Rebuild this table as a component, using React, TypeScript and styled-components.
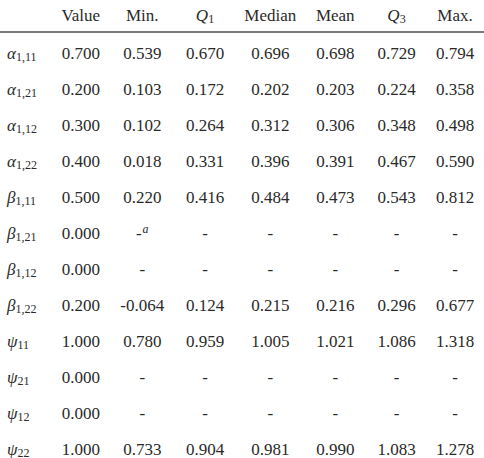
import React from "react";
import styled, { createGlobalStyle } from "styled-components";

const GlobalStyle = createGlobalStyle`
  html, body {
    margin: 0;
    padding: 0;
    background: #ffffff;
  }
`;

const COLUMNS = "50px 61.5px 61.5px 64px 66.5px 63.5px 59px 58px";

interface Row {
  sym: string;
  sub: string;
  vals: string[];
}

const dash = ["-", "-", "-", "-", "-", "-"];

const rows: Row[] = [
  { sym: "α", sub: "1,11", vals: ["0.700", "0.539", "0.670", "0.696", "0.698", "0.729", "0.794"] },
  { sym: "α", sub: "1,21", vals: ["0.200", "0.103", "0.172", "0.202", "0.203", "0.224", "0.358"] },
  { sym: "α", sub: "1,12", vals: ["0.300", "0.102", "0.264", "0.312", "0.306", "0.348", "0.498"] },
  { sym: "α", sub: "1,22", vals: ["0.400", "0.018", "0.331", "0.396", "0.391", "0.467", "0.590"] },
  { sym: "β", sub: "1,11", vals: ["0.500", "0.220", "0.416", "0.484", "0.473", "0.543", "0.812"] },
  { sym: "β", sub: "1,21", vals: ["0.000", "-a", "-", "-", "-", "-", "-"] },
  { sym: "β", sub: "1,12", vals: ["0.000", ...dash] },
  { sym: "β", sub: "1,22", vals: ["0.200", "-0.064", "0.124", "0.215", "0.216", "0.296", "0.677"] },
  { sym: "ψ", sub: "11", vals: ["1.000", "0.780", "0.959", "1.005", "1.021", "1.086", "1.318"] },
  { sym: "ψ", sub: "21", vals: ["0.000", ...dash] },
  { sym: "ψ", sub: "12", vals: ["0.000", ...dash] },
  { sym: "ψ", sub: "22", vals: ["1.000", "0.733", "0.904", "0.981", "0.990", "1.083", "1.278"] },
];

export default function App() {
  return (
    <>
      <GlobalStyle />
      <Table>
        <HeaderRow>
          <Cell />
          <Cell>Value</Cell>
          <Cell>Min.</Cell>
          <Cell>
            <MathVar>Q</MathVar>
            <Sub>1</Sub>
          </Cell>
          <Cell>Median</Cell>
          <Cell>Mean</Cell>
          <Cell>
            <MathVar>Q</MathVar>
            <Sub>3</Sub>
          </Cell>
          <Cell>Max.</Cell>
        </HeaderRow>
        <Rule />
        <Body>
          {rows.map((r, i) => (
            <DataRow key={i}>
              <LabelCell>
                <MathVar>{r.sym}</MathVar>
                <Sub>{r.sub}</Sub>
              </LabelCell>
              {r.vals.map((v, j) => (
                <Cell key={j}>
                  {v === "-a" ? (
                    <>
                      -<Sup>a</Sup>
                    </>
                  ) : (
                    v
                  )}
                </Cell>
              ))}
            </DataRow>
          ))}
        </Body>
      </Table>
    </>
  );
}

const Table = styled.div`
  width: 484px;
  display: flex;
  flex-direction: column;
  font-family: "Liberation Serif", "Times New Roman", Times, serif;
  font-size: 17px;
  color: #2a2a2a;
`;

const HeaderRow = styled.div`
  display: grid;
  grid-template-columns: ${COLUMNS};
  line-height: 28px;
  padding-top: 2px;
  padding-bottom: 1px;
`;

const Rule = styled.div`
  height: 2px;
  background: #7a7a7a;
`;

const Body = styled.div`
  display: flex;
  flex-direction: column;
  padding-top: 3px;
`;

const DataRow = styled.div`
  display: grid;
  grid-template-columns: ${COLUMNS};
  height: 36px;
  line-height: 36px;
`;

const Cell = styled.div`
  text-align: center;
  white-space: nowrap;
`;

const LabelCell = styled.div`
  text-align: left;
  padding-left: 7px;
  white-space: nowrap;
`;

const MathVar = styled.span`
  font-style: italic;
`;

const Sub = styled.span`
  font-size: 12px;
  vertical-align: -2px;
  line-height: 0;
`;

const Sup = styled.span`
  font-size: 12px;
  font-style: italic;
  vertical-align: 6px;
  line-height: 0;
  margin-left: 1px;
`;
